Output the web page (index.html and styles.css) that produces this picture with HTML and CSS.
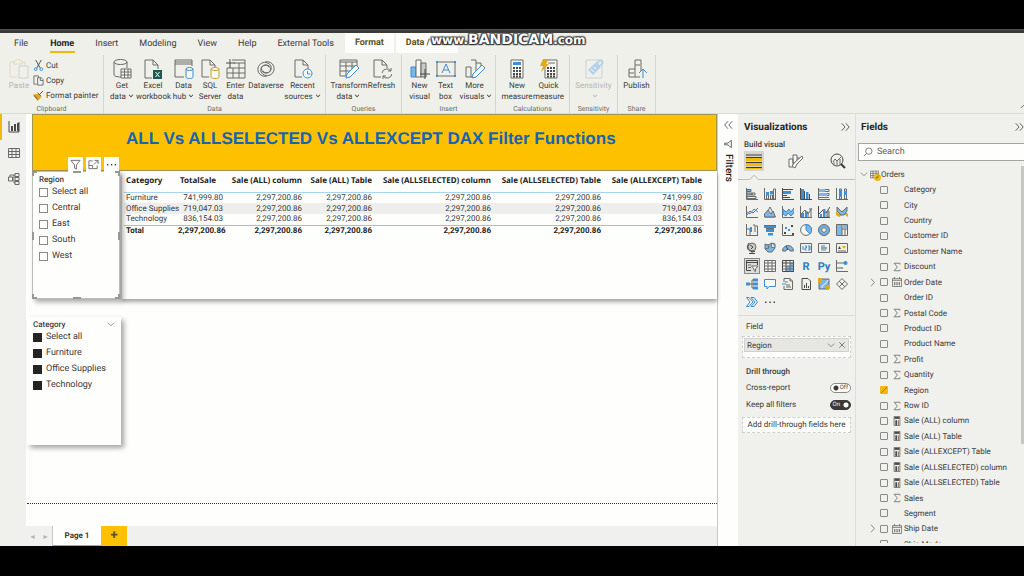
FILE: index.html
```
<!DOCTYPE html>
<html lang="en">
<head>
  <meta charset="UTF-8" />
  <meta name="viewport" content="width=device-width, initial-scale=1.0" />
  <title>ALL Vs ALLSELECTED Vs ALLEXCEPT</title>
  <link rel="stylesheet" href="styles.css">
</head>
<body>

  <!-- icon sprite -->
  <svg class="sprite" aria-hidden="true">
    <!-- ribbon, 20x20 -->
    <symbol id="i-paste" viewBox="0 0 20 20"><path class="tan" d="M8 18H1V3h4M13 3h3v3M5 5V2h2a2 2 0 0 1 4 0h2v3z"/><path class="pale" d="M10 7h9v12h-9z"/></symbol>
    <symbol id="i-cut" viewBox="0 0 12 12"><path class="ln2" d="M3 0l5 9M9 0L4 9"/><circle class="bl" cx="3" cy="10" r="1.5"/><circle class="bl" cx="9" cy="10" r="1.5"/></symbol>
    <symbol id="i-copy" viewBox="0 0 12 12"><path class="ln" d="M4 10H1V1h5v2M5 3h4l2 2v6H5zM8 3v3h3"/></symbol>
    <symbol id="i-brush" viewBox="0 0 12 12"><path class="gold" d="M0 5l6-1 3 4-4 4z"/><path class="ln2" d="M5 3l4 4M7 5l4-4M1 6l4 4"/></symbol>
    <symbol id="i-get" viewBox="0 0 20 20"><path class="ln" d="M9 18c-4 0-7-1-7-2V3M15 3v6"/><ellipse class="ln" cx="8.500" cy="3" rx="6.500" ry="2.500"/><path class="ln wf" d="M9 10h10v9H9zM9 13h10M9 16h10M12.500 10v9M16 10v9"/></symbol>
    <symbol id="i-excel" viewBox="0 0 20 20"><path class="ln" d="M9 19H2V1h8l5 5v4M10 1v5h5"/><path class="xl" d="M10 11h9v9h-9z"/><path class="wl" d="M12.500 13l4 5M16.500 13l-4 5"/></symbol>
    <symbol id="i-hub" viewBox="0 0 20 20"><path class="ln" d="M10 18H1V1h17v6M1 5h17M1 3h17"/><path class="bl wf" d="M12 10v8c0 2 7 2 7 0v-8"/><ellipse class="bl wf" cx="15.500" cy="10" rx="3.500" ry="1.500"/></symbol>
    <symbol id="i-sql" viewBox="0 0 20 20"><path class="ln" d="M9 18H2V1h8l5 5v2M10 1v5h5"/><path class="gd wf" d="M11 10v8c0 2 8 2 8 0v-8"/><ellipse class="gd wf" cx="15" cy="10" rx="4" ry="1.500"/></symbol>
    <symbol id="i-enter" viewBox="0 0 20 20"><path class="ln" d="M6 1h13v18H1V9M1 9h18M1 14h18M7 9v10M13 4v15M8 4h11"/><path class="ln2" d="M4 0v9M0 4h9"/></symbol>
    <symbol id="i-verse" viewBox="0 0 20 20"><path class="ln" d="M11 17a7 7 0 1 1 4-10c1 4-1 7-5 7a4 4 0 1 1 3-6M9 3a7 7 0 1 1-4 10c-1-4 1-7 5-7a4 4 0 1 1-3 6"/></symbol>
    <symbol id="i-recent" viewBox="0 0 20 20"><path class="ln" d="M9 18H2V1h8l5 5v4M10 1v5h5"/><circle class="bl wf" cx="14.500" cy="14.500" r="4.500"/><path class="bl" d="M14.500 12v3h3"/></symbol>
    <symbol id="i-transform" viewBox="0 0 20 20"><path class="ln" d="M8 17H1V1h17v7M1 3h17M1 7h17M1 12h11M7 3v14M13 3v8"/><path class="bl wf" d="M7 19l1-4L17 6l3 3-9 9z"/></symbol>
    <symbol id="i-refresh" viewBox="0 0 20 20"><path class="ln" d="M9 18H2V1h8l5 5v3M10 1v5h5"/><path class="ln" d="M10 14a5 5 0 0 1 9-2M19 9v3h-3M20 15a5 5 0 0 1-9 2M11 20v-3h3"/></symbol>
    <symbol id="i-visual" viewBox="0 0 20 20"><path class="bl bf" d="M1 8h5v10H1z"/><path class="ln wf" d="M6 1h5v17H6z"/><path class="ln gf" d="M11 4h5v14h-5z"/><path class="ln2" d="M15 10v10M10 15h10"/></symbol>
    <symbol id="i-text" viewBox="0 0 20 20"><path class="ln" d="M1 3h18v14H1z"/><path class="bl" d="M6 14l4-9 4 9M7.500 11h5"/><path class="bs" d="M0 2h2v2H0zM18 2h2v2h-2zM0 16h2v2H0zM18 16h2v2h-2z"/></symbol>
    <symbol id="i-more" viewBox="0 0 20 20"><path class="ln" d="M1 8h5v10H1zM6 1h5v17H6M11 4h5v4"/><path class="bl wf" d="M7 19l1-4L17 6l3 3-9 9z"/></symbol>
    <symbol id="i-calc" viewBox="0 0 20 20"><path class="ln wf" d="M4 1h12v18H4z"/><path class="bs" d="M6 3h8v3H6z"/><path class="dots" d="M6 9h8M6 12h8M6 15h8M6 17.500h8"/></symbol>
    <symbol id="i-quick" viewBox="0 0 20 20"><path class="ln wf" d="M6 1h12v18H6z"/><path class="ln" d="M9 4h7"/><path class="dots" d="M8 9h8M8 12h8M8 15h8M8 17.500h8"/><path class="gold" d="M4 0h6L7 5h3l-8 8 2-6H1z"/></symbol>
    <symbol id="i-sens" viewBox="0 0 20 20"><path class="pale" d="M2 1h16v18H2z"/><path class="paleb" d="M4 11l8-8 5 5-8 8z"/><path class="wl" d="M7 10l3 3M10 8l2 2"/><path class="pb" d="M13 5l2-3a2 2 0 0 1 3 3l-3 2"/></symbol>
    <symbol id="i-publish" viewBox="0 0 20 20"><path class="ln" d="M13 18H2v-8h6M8 18V6h5M8 6V1h6v11M2 14h5"/><path class="bl" d="M16 19v-9M12 14l4-4 4 4"/></symbol>

    <!-- side rail and page chrome, 12x12 -->
    <symbol id="i-report" viewBox="0 0 12 12"><path class="ln2" d="M1 0v11h10V1"/><path class="ds" d="M3 5h2v5H3zM6 3h2v7H6zM9 2h2v8H9z"/></symbol>
    <symbol id="i-grid" viewBox="0 0 12 12"><path class="ln" d="M.500 1.500h11v9H.500zM.500 4.500h11M.500 7.500h11M4 1.500v9M8 1.500v9"/></symbol>
    <symbol id="i-model" viewBox="0 0 12 12"><path class="ln" d="M.500 4h4v4h-4zM7 .500h4v3H7zM7 4.500h4v3H7zM7 8.500h4v3H7zM4.500 5H6V2h1M4.500 7H6v3h1M2 4V2h4"/></symbol>
    <symbol id="i-funnel" viewBox="0 0 12 12"><path class="ln" d="M1 1.500h10L7 6.500V11l-2-1V6.500z"/></symbol>
    <symbol id="i-focus" viewBox="0 0 12 12"><path class="ln" d="M5 2H1v8.500h9V7M1 7h4v3M7 1.500h4v4M11 1.500L6.500 6"/></symbol>
    <symbol id="i-dots" viewBox="0 0 12 12"><path class="ds" d="M1 5.500h1.500V7H1zM5.300 5.500h1.500V7H5.300zM9.500 5.500H11V7H9.500z"/></symbol>
    <symbol id="i-down" viewBox="0 0 12 12"><path class="ln" d="M1 4l5 4.500L11 4"/></symbol>
    <symbol id="i-right" viewBox="0 0 12 12"><path class="ln" d="M4 1l4.500 5L4 11"/></symbol>
    <symbol id="i-up" viewBox="0 0 12 12"><path class="ln2" d="M1 8l5-4.500L11 8"/></symbol>
    <symbol id="i-close" viewBox="0 0 12 12"><path class="ln2" d="M2 2l8 8M10 2l-8 8"/></symbol>
    <symbol id="i-dright" viewBox="0 0 12 12"><path class="ln2" d="M2 1.500L6 6l-4 4.500M7 1.500L11 6l-4 4.500"/></symbol>
    <symbol id="i-dleft" viewBox="0 0 12 12"><path class="ln2" d="M6 1.500L2 6l4 4.500M11 1.500L7 6l4 4.500"/></symbol>
    <symbol id="i-horn" viewBox="0 0 12 12"><path class="ln2" d="M10 1.500v9L6 7H2V5h4z"/></symbol>
    <symbol id="i-search" viewBox="0 0 12 12"><circle class="ln" cx="7" cy="5" r="3.800"/><path class="ln" d="M4.300 7.700L1 11"/></symbol>
    <symbol id="i-sigma" viewBox="0 0 12 12"><path class="ln" d="M9.500 3V1.500H2.500L6.500 6l-4 4.500h7V9"/></symbol>
    <symbol id="i-cal" viewBox="0 0 12 12"><path class="ln" d="M.500 2h11v9.500H.500zM.500 4h11M3 0v2M9 0v2M3 6v4M5 6v4M7 6v4M9 6v4"/></symbol>
    <symbol id="i-fcalc" viewBox="0 0 12 12"><path class="ln" d="M2.500 .500h7v11h-7z"/><path class="ds" d="M3 1h6v2.500H3z"/><path class="dots" d="M4 6h4M4 8h4M4 10h4"/></symbol>

    <!-- visual gallery, 12x12 -->
    <symbol id="v-hstack" viewBox="0 0 12 12"><path class="ln" d="M.500 0v11.500H12"/><path class="ln bf" d="M1 1.500h4v2H1zM1 5h5v2H1z"/><path class="ln" d="M6 5h3v2H6zM1 8.500h9v2H1z"/></symbol>
    <symbol id="v-vstack" viewBox="0 0 12 12"><path class="ln" d="M.500 0v11.500H12M2.500 7h2v4h-2zM6.500 7h2v4h-2zM9.500 1h2v10h-2z"/><path class="bs" d="M2 4h3v3H2zM6 3h3v3H6z"/></symbol>
    <symbol id="v-hbar" viewBox="0 0 12 12"><path class="ln2" d="M.500 0v11.500H12M1 1.500h10M1 7.500h4M1 9.500h7"/><path class="bs" d="M1 3h8v3H1z"/></symbol>
    <symbol id="v-vbar" viewBox="0 0 12 12"><path class="ln2" d="M.500 0v11.500H12M4.500 3v8M9.500 6v5"/><path class="bs" d="M1 1h3v10H1zM6 4h2.500v7H6z"/></symbol>
    <symbol id="v-hfull" viewBox="0 0 12 12"><path class="ln" d="M.500 0v11.500H12M1 1.500h10v2H1zM1 5.500h10v2H1zM1 9.500h10"/><path class="bf" d="M1 1h6v3H1zM1 5h8v3H1z"/></symbol>
    <symbol id="v-vfull" viewBox="0 0 12 12"><path class="ln" d="M.500 0v11.500H12M3.500 1h2v10h-2zM8.500 1h2v10h-2z"/><path class="bs" d="M3 2h3v7H3zM8 3h3v4H8z"/></symbol>
    <symbol id="v-line" viewBox="0 0 12 12"><path class="ln" d="M.500 0v11.500H12M1 9l3-4 3 2 5-5"/><path class="bl" d="M1 6l3 2 4-5 4 3"/></symbol>
    <symbol id="v-area" viewBox="0 0 12 12"><path class="ln" d="M1 11l5-10 5 10z"/><path class="ln bf" d="M.500 11V8L4 4l3 4 2-3 2.500 6z"/></symbol>
    <symbol id="v-sarea" viewBox="0 0 12 12"><path class="ln" d="M.500 0v11.500H12"/><path class="bl bf" d="M1 8V3l3 3 3-3 2 3 3-4v5l-3 3-3-3-2 3z"/></symbol>
    <symbol id="v-combo" viewBox="0 0 12 12"><path class="ln" d="M.500 0v11.500H12M6 6h2v5M9 3h2v8M1 8l4-4 3 4 4-6"/><path class="bs" d="M1 7h3v4H1zM5 5h2v6H5z"/></symbol>
    <symbol id="v-combo2" viewBox="0 0 12 12"><path class="ln2" d="M.500 0v11.500H12M1 8l4-4 3 3 4-6"/><path class="bs" d="M2 8h2v3H2zM5 3h2.500v8H5z"/><path class="ln gf" d="M9 5h2v6H9z"/></symbol>
    <symbol id="v-ribbon" viewBox="0 0 12 12"><path class="gold" d="M0 5l3 3 4-4 5 4v3L8 8l-5 3-3-2z"/><path class="ln bf" d="M1 1l5 5 5-5v4L8 9H5L1 5z"/></symbol>
    <symbol id="v-fall" viewBox="0 0 12 12"><path class="ln" d="M.500 0v11.500H12M1 5h3v6M7 1h2v7M9.500 2h2v9"/><path class="bs" d="M4 3h2v5H4z"/></symbol>
    <symbol id="v-funnel" viewBox="0 0 12 12"><path class="bs" d="M0 1h12v3H0zM2 5h8v3H2zM4 9h5v2.500H4z"/><path class="ln" d="M0 1.500h12M2 4.500h8"/></symbol>
    <symbol id="v-scatter" viewBox="0 0 12 12"><path class="ln" d="M.500 0v11.500H12"/><path class="ds" d="M9 1h2v2H9zM2 8h2v2H2zM10 9h2v2h-2z"/><path class="bs" d="M3 3h2v2H3zM6 5h2v2H6z"/></symbol>
    <symbol id="v-pie" viewBox="0 0 12 12"><circle class="ln wf" cx="6" cy="6" r="5.400"/><path class="bl bf" d="M6 .600v5.400l4 4A5.400 5.400 0 0 0 6 .600z"/></symbol>
    <symbol id="v-donut" viewBox="0 0 12 12"><circle class="thick" cx="6" cy="6" r="4"/><circle class="ln" cx="6" cy="6" r="5.500"/><circle class="ln" cx="6" cy="6" r="2.300"/></symbol>
    <symbol id="v-tree" viewBox="0 0 12 12"><path class="bf" d="M1 1h5v10H1zM7 1h4v3H7z"/><path class="ln" d="M.500 .500h11v11H.500zM6 .500v11M6 5h6M9 5v6.500"/></symbol>
    <symbol id="v-map" viewBox="0 0 12 12"><circle class="ln gf" cx="6" cy="5" r="4"/><path class="ln2" d="M3 1C0 4 1 9 6 9.500h3M6 9v2M3 11.500h6M4 3l3 2-2 2"/></symbol>
    <symbol id="v-fmap" viewBox="0 0 12 12"><path class="ln bf" d="M1 2l3 1 4-2 3 1v4L8 10H4L1 7zM4 3l1 3-4 1M8 1L7 5l4 1"/></symbol>
    <symbol id="v-gauge" viewBox="0 0 12 12"><path class="ln bf" d="M.500 9a5.500 5.500 0 0 1 11 0H8a2 2 0 0 0-4 0z"/><path class="ln2" d="M6 8L4 4"/></symbol>
    <symbol id="v-card" viewBox="0 0 12 12"><path class="ln" d="M.500 1.500h11v9H.500z"/><path class="bl" d="M3 4v4M5 4h1.500v2H5v2h1.500M8 4h2v2H8.500H10v2H8"/></symbol>
    <symbol id="v-mcard" viewBox="0 0 12 12"><path class="ln" d="M.500 1.500h11v9H.500z"/><path class="bl" d="M3 4h4M3 8h5"/><path class="ln2" d="M3 6h6"/></symbol>
    <symbol id="v-kpi" viewBox="0 0 12 12"><path class="ln" d="M.500 1.500h11v9H.500zM2 9h8"/><path class="ds" d="M2 7l1.500-3L5 7z"/><path class="gold" d="M6 4h4L8 7z"/></symbol>
    <symbol id="v-slicer" viewBox="0 0 12 12"><path class="ln2" d="M5 10.500H.500v-10h11V5M.500 2.500h11"/><path class="ln" d="M2 5h3M2 7.500h3"/><path class="ln wf" d="M5.500 6h6.500l-2.500 3v2.500l-1.500-1V9z"/></symbol>
    <symbol id="v-table" viewBox="0 0 12 12"><path class="ln wf" d="M.500 .500h11v11H.500zM.500 3h11M.500 6h11M.500 9h11M4 .500v11M8 .500v11"/></symbol>
    <symbol id="v-matrix" viewBox="0 0 12 12"><path class="bf" d="M4 6h8v6H4zM8 3h4v3H8z"/><path class="ln2" d="M.500 .500h11v11H.500zM.500 3h11M4 .500v11"/><path class="ln" d="M.500 6h11M.500 9h11M8 .500v11"/></symbol>
    <symbol id="v-infl" viewBox="0 0 12 12"><path class="ln" d="M.500 0v11.500H12M1 3h7M1 8h4"/><circle class="bs" cx="9.500" cy="3" r="2"/><circle class="bs" cx="6" cy="8" r="1"/></symbol>
    <symbol id="v-decomp" viewBox="0 0 12 12"><path class="ln" d="M3 6h3M6 2v8M6 2h2M6 10h2M6 6h2"/><path class="bs" d="M0 4.500h4v3H0zM7 .500h5v3H7zM7 4.500h5v3H7zM7 8.500h5v3H7z"/></symbol>
    <symbol id="v-qa" viewBox="0 0 12 12"><path class="bl wf" d="M.500 1.500h11v7H5L3 11V8.500H.500z"/></symbol>
    <symbol id="v-narr" viewBox="0 0 12 12"><path class="ln" d="M2 4V.500h6L10.500 3v8.500H2V8M8 .500V3h2.500M4 7h4M4 9h5"/><path class="bl" d="M0 6h4M3 4h3"/></symbol>
    <symbol id="v-page" viewBox="0 0 12 12"><path class="ln2" d="M2 .500h6L10.500 3v8.500H2z"/><path class="ds" d="M4 7h1v3H4zM6 5h1v5H6zM8 8h1v2H8z"/></symbol>
    <symbol id="v-arc" viewBox="0 0 12 12"><path class="ln bf" d="M1 1h10v10H1z"/><path class="wl" d="M4 10c0-4 4-3 6-8"/><path class="gold" d="M0 0h4v4l-2 2-2-2zM8 7h3v4H8z"/></symbol>
    <symbol id="v-app" viewBox="0 0 12 12"><path class="ln" d="M6 .500L11.500 6 6 11.500.500 6zM3.200 3.200l5.600 5.600M8.800 3.200L3.200 8.800"/></symbol>
    <symbol id="v-auto" viewBox="0 0 12 12"><path class="bl" d="M.500 1.500H3L7 6l-4 4.500H.500L4 6zM5 1.500h3L11.500 6 8 10.500H5L9 6z"/></symbol>
    <symbol id="i-format" viewBox="0 0 16 16"><path class="ln wf" d="M1 6h4v8H1zM5 2h4v8H5zM9 5h3v3"/><path class="ln wf" d="M15 5l-6 6-2 4-3-2 3-4 7-6z"/></symbol>
    <symbol id="i-analytics" viewBox="0 0 16 16"><circle class="ln2" cx="7" cy="7" r="6"/><path class="ln" d="M3 9l2-3 2 2 4-4M4 12V9M7 12V8M10 12V6"/><path class="ln3" d="M11 11l4 4"/></symbol>
  </svg>

  <div class="title-strip"></div>

  <nav class="tabs">
    <button class="tab">File</button>
    <button class="tab active">Home</button>
    <button class="tab">Insert</button>
    <button class="tab">Modeling</button>
    <button class="tab">View</button>
    <button class="tab">Help</button>
    <button class="tab">External Tools</button>
    <button class="tab context">Format</button>
    <button class="tab context">Data / Drill</button>
    <div class="watermark"><small>www.</small>BANDICAM<small>.com</small></div>
  </nav>

  <header class="ribbon">
    <section class="group clipboard">
      <div class="tools">
        <button class="tool off"><svg><use href="#i-paste"/></svg>Paste</button>
        <div class="small-tools">
          <button><svg><use href="#i-cut"/></svg>Cut</button>
          <button><svg><use href="#i-copy"/></svg>Copy</button>
          <button><svg><use href="#i-brush"/></svg>Format painter</button>
        </div>
      </div>
      <h2>Clipboard</h2>
    </section>
    <section class="group data">
      <div class="tools">
        <button class="tool"><svg><use href="#i-get"/></svg>Get<br>data<i class="caret"></i></button>
        <button class="tool"><svg><use href="#i-excel"/></svg>Excel<br>workbook</button>
        <button class="tool"><svg><use href="#i-hub"/></svg>Data<br>hub<i class="caret"></i></button>
        <button class="tool"><svg><use href="#i-sql"/></svg>SQL<br>Server</button>
        <button class="tool"><svg><use href="#i-enter"/></svg>Enter<br>data</button>
        <button class="tool"><svg><use href="#i-verse"/></svg>Dataverse</button>
        <button class="tool"><svg><use href="#i-recent"/></svg>Recent<br>sources<i class="caret"></i></button>
      </div>
      <h2>Data</h2>
    </section>
    <section class="group queries">
      <div class="tools">
        <button class="tool"><svg><use href="#i-transform"/></svg>Transform<br>data<i class="caret"></i></button>
        <button class="tool"><svg><use href="#i-refresh"/></svg>Refresh</button>
      </div>
      <h2>Queries</h2>
    </section>
    <section class="group insert">
      <div class="tools">
        <button class="tool"><svg><use href="#i-visual"/></svg>New<br>visual</button>
        <button class="tool"><svg><use href="#i-text"/></svg>Text<br>box</button>
        <button class="tool"><svg><use href="#i-more"/></svg>More<br>visuals<i class="caret"></i></button>
      </div>
      <h2>Insert</h2>
    </section>
    <section class="group calculations">
      <div class="tools">
        <button class="tool"><svg><use href="#i-calc"/></svg>New<br>measure</button>
        <button class="tool"><svg><use href="#i-quick"/></svg>Quick<br>measure</button>
      </div>
      <h2>Calculations</h2>
    </section>
    <section class="group sensitivity">
      <div class="tools">
        <button class="tool off"><svg><use href="#i-sens"/></svg>Sensitivity<br><i class="caret"></i></button>
      </div>
      <h2>Sensitivity</h2>
    </section>
    <section class="group share">
      <div class="tools">
        <button class="tool"><svg><use href="#i-publish"/></svg>Publish</button>
      </div>
      <h2>Share</h2>
    </section>
    <button class="collapse" aria-label="Collapse ribbon"><svg><use href="#i-up"/></svg></button>
  </header>

  <main class="workspace">
    <nav class="rail">
      <button class="active" aria-label="Report"><svg><use href="#i-report"/></svg></button>
      <button aria-label="Data"><svg><use href="#i-grid"/></svg></button>
      <button aria-label="Model"><svg><use href="#i-model"/></svg></button>
    </nav>

    <div class="center">
      <div class="canvas">
        <h1 class="banner">ALL Vs ALLSELECTED Vs ALLEXCEPT DAX Filter Functions</h1>
        <div class="visuals">
          <section class="slicer selected">
            <div class="visual-header">
              <button aria-label="Filters"><svg><use href="#i-funnel"/></svg></button>
              <button aria-label="Focus mode"><svg><use href="#i-focus"/></svg></button>
              <button aria-label="More options"><svg><use href="#i-dots"/></svg></button>
            </div>
            <i class="grip tl"></i><i class="grip tm"></i><i class="grip tr"></i>
            <i class="grip ml"></i><i class="grip mr"></i>
            <i class="grip bl-c"></i><i class="grip bm"></i><i class="grip br"></i>
            <h3>Region</h3>
            <label><input type="checkbox">Select all</label>
            <label><input type="checkbox">Central</label>
            <label><input type="checkbox">East</label>
            <label><input type="checkbox">South</label>
            <label><input type="checkbox">West</label>
          </section>

          <section class="table-card">
            <table>
              <colgroup><col class="c1"><col class="c2"><col class="c3"><col class="c4"><col class="c5"><col class="c6"><col class="c7"></colgroup>
              <thead>
                <tr><th>Category</th><th>TotalSale</th><th>Sale (ALL) column</th><th>Sale (ALL) Table</th><th>Sale (ALLSELECTED) column</th><th>Sale (ALLSELECTED) Table</th><th>Sale (ALLEXCEPT) Table</th></tr>
              </thead>
              <tbody>
                <tr><td>Furniture</td><td>741,999.80</td><td>2,297,200.86</td><td>2,297,200.86</td><td>2,297,200.86</td><td>2,297,200.86</td><td>741,999.80</td></tr>
                <tr><td>Office Supplies</td><td>719,047.03</td><td>2,297,200.86</td><td>2,297,200.86</td><td>2,297,200.86</td><td>2,297,200.86</td><td>719,047.03</td></tr>
                <tr><td>Technology</td><td>836,154.03</td><td>2,297,200.86</td><td>2,297,200.86</td><td>2,297,200.86</td><td>2,297,200.86</td><td>836,154.03</td></tr>
              </tbody>
              <tfoot>
                <tr><td>Total</td><td>2,297,200.86</td><td>2,297,200.86</td><td>2,297,200.86</td><td>2,297,200.86</td><td>2,297,200.86</td><td>2,297,200.86</td></tr>
              </tfoot>
            </table>
          </section>
        </div>

        <section class="slicer category">
          <h3>Category <svg><use href="#i-down"/></svg></h3>
          <label><input type="checkbox" checked>Select all</label>
          <label><input type="checkbox" checked>Furniture</label>
          <label><input type="checkbox" checked>Office Supplies</label>
          <label><input type="checkbox" checked>Technology</label>
        </section>
        <div class="page-end"></div>
      </div>

      <footer class="pages">
        <button class="arrow" aria-label="Previous page">◂</button>
        <button class="arrow" aria-label="Next page">▸</button>
        <button class="page">Page 1</button>
        <button class="add" aria-label="New page">+</button>
      </footer>
    </div>

    <aside class="filters">
      <svg><use href="#i-dleft"/></svg>
      <svg><use href="#i-horn"/></svg>
      <span>Filters</span>
    </aside>

    <aside class="viz">
      <h2>Visualizations <svg><use href="#i-dright"/></svg></h2>
      <h3>Build visual</h3>
      <div class="viz-tabs">
        <button class="build active" aria-label="Build"><i></i></button>
        <button aria-label="Format"><svg><use href="#i-format"/></svg></button>
        <button aria-label="Analytics"><svg><use href="#i-analytics"/></svg></button>
      </div>
      <div class="gallery">
        <button><svg><use href="#v-hstack"/></svg></button>
        <button><svg><use href="#v-vstack"/></svg></button>
        <button><svg><use href="#v-hbar"/></svg></button>
        <button><svg><use href="#v-vbar"/></svg></button>
        <button><svg><use href="#v-hfull"/></svg></button>
        <button><svg><use href="#v-vfull"/></svg></button>
        <button><svg><use href="#v-line"/></svg></button>
        <button><svg><use href="#v-area"/></svg></button>
        <button><svg><use href="#v-sarea"/></svg></button>
        <button><svg><use href="#v-combo"/></svg></button>
        <button><svg><use href="#v-combo2"/></svg></button>
        <button><svg><use href="#v-ribbon"/></svg></button>
        <button><svg><use href="#v-fall"/></svg></button>
        <button><svg><use href="#v-funnel"/></svg></button>
        <button><svg><use href="#v-scatter"/></svg></button>
        <button><svg><use href="#v-pie"/></svg></button>
        <button><svg><use href="#v-donut"/></svg></button>
        <button><svg><use href="#v-tree"/></svg></button>
        <button><svg><use href="#v-map"/></svg></button>
        <button><svg><use href="#v-fmap"/></svg></button>
        <button><svg><use href="#v-gauge"/></svg></button>
        <button><svg><use href="#v-card"/></svg></button>
        <button><svg><use href="#v-mcard"/></svg></button>
        <button><svg><use href="#v-kpi"/></svg></button>
        <button class="active"><svg><use href="#v-slicer"/></svg></button>
        <button><svg><use href="#v-table"/></svg></button>
        <button><svg><use href="#v-matrix"/></svg></button>
        <button>R</button>
        <button>Py</button>
        <button><svg><use href="#v-infl"/></svg></button>
        <button><svg><use href="#v-decomp"/></svg></button>
        <button><svg><use href="#v-qa"/></svg></button>
        <button><svg><use href="#v-narr"/></svg></button>
        <button><svg><use href="#v-page"/></svg></button>
        <button><svg><use href="#v-arc"/></svg></button>
        <button><svg><use href="#v-app"/></svg></button>
        <button><svg><use href="#v-auto"/></svg></button>
        <button><svg><use href="#i-dots"/></svg></button>
      </div>
      <div class="wells">
        <h4>Field</h4>
        <div class="well">
          <div class="chip"><span>Region</span><svg><use href="#i-down"/></svg><svg><use href="#i-close"/></svg></div>
        </div>
        <h4 class="drill">Drill through</h4>
        <label class="switch"><span>Cross-report</span><input type="checkbox"><b>Off</b></label>
        <label class="switch"><span>Keep all filters</span><input type="checkbox" checked><b>On</b></label>
        <div class="well drop">Add drill-through fields here</div>
      </div>
    </aside>

    <aside class="fields">
      <h2>Fields <svg><use href="#i-dright"/></svg></h2>
      <div class="search"><svg><use href="#i-search"/></svg><input type="text" placeholder="Search" aria-label="Search"></div>
      <div class="entity"><svg><use href="#i-down"/></svg><span class="table-icon"><svg><use href="#i-grid"/></svg><i>✓</i></span>Orders</div>
      <div class="list">
        <ul>
          <li><label><input type="checkbox"><span></span>Category</label></li>
          <li><label><input type="checkbox"><span></span>City</label></li>
          <li><label><input type="checkbox"><span></span>Country</label></li>
          <li><label><input type="checkbox"><span></span>Customer ID</label></li>
          <li><label><input type="checkbox"><span></span>Customer Name</label></li>
          <li><label><input type="checkbox"><span><svg><use href="#i-sigma"/></svg></span>Discount</label></li>
          <li class="expand"><svg><use href="#i-right"/></svg><label><input type="checkbox"><span><svg><use href="#i-cal"/></svg></span>Order Date</label></li>
          <li><label><input type="checkbox"><span></span>Order ID</label></li>
          <li><label><input type="checkbox"><span><svg><use href="#i-sigma"/></svg></span>Postal Code</label></li>
          <li><label><input type="checkbox"><span></span>Product ID</label></li>
          <li><label><input type="checkbox"><span></span>Product Name</label></li>
          <li><label><input type="checkbox"><span><svg><use href="#i-sigma"/></svg></span>Profit</label></li>
          <li><label><input type="checkbox"><span><svg><use href="#i-sigma"/></svg></span>Quantity</label></li>
          <li><label><input type="checkbox" checked><span></span>Region</label></li>
          <li><label><input type="checkbox"><span><svg><use href="#i-sigma"/></svg></span>Row ID</label></li>
          <li><label><input type="checkbox"><span><svg><use href="#i-fcalc"/></svg></span>Sale (ALL) column</label></li>
          <li><label><input type="checkbox"><span><svg><use href="#i-fcalc"/></svg></span>Sale (ALL) Table</label></li>
          <li><label><input type="checkbox"><span><svg><use href="#i-fcalc"/></svg></span>Sale (ALLEXCEPT) Table</label></li>
          <li><label><input type="checkbox"><span><svg><use href="#i-fcalc"/></svg></span>Sale (ALLSELECTED) column</label></li>
          <li><label><input type="checkbox"><span><svg><use href="#i-fcalc"/></svg></span>Sale (ALLSELECTED) Table</label></li>
          <li><label><input type="checkbox"><span><svg><use href="#i-sigma"/></svg></span>Sales</label></li>
          <li><label><input type="checkbox"><span></span>Segment</label></li>
          <li class="expand"><svg><use href="#i-right"/></svg><label><input type="checkbox"><span><svg><use href="#i-cal"/></svg></span>Ship Date</label></li>
          <li><label><input type="checkbox"><span></span>Ship Mode</label></li>
        </ul>
      </div>
      <div class="scrollbar"></div>
    </aside>
  </main>

</body>
</html>
```
FILE: styles.css
```
* {
  box-sizing: border-box;
}

body {
  margin: 0;
  height: 100vh;
  padding: 29px 0 30px;
  display: flex;
  flex-direction: column;
  background: #000;
  color: #3b3a39;
  font-family: Roboto, "Open Sans", sans-serif;
  font-size: 8px;
  text-rendering: geometricPrecision;
  overflow: hidden;
}

button, input {
  font: inherit;
  color: inherit;
  text-rendering: inherit;
}

button {
  border: 0;
  padding: 0;
  background: none;
}

h1, h2, h3, h4, ul {
  margin: 0;
  padding: 0;
  font-size: inherit;
  font-weight: normal;
}

svg {
  display: block;
  flex: none;
  width: 12px;
  height: 12px;
}

.sprite {
  position: absolute;
  width: 0;
  height: 0;
}

/* icon strokes and fills */
.ln, .ln2, .ln3, .bl, .gd, .tan, .pale, .pb, .wl, .thick, .dots { fill: none; }
.ln { stroke: #6b6a68; }
.ln2 { stroke: #4a4947; }
.ln3 { stroke: #3b3a39; stroke-width: 2; }
.bl { stroke: #3f8bd0; }
.gd { stroke: #c9a02c; }
.tan { stroke: #e3d8bd; }
.pale { stroke: #cfcfcd; }
.paleb { fill: #b5d2ec; }
.pb { stroke: #b5d2ec; stroke-width: 2; }
.wl { stroke: #fff; }
.thick { stroke: #6fb2ea; stroke-width: 3; }
.dots { stroke: #4a4947; stroke-width: 2; stroke-dasharray: 2 1; }
.wf { fill: #f8f8f5; }
.gf { fill: #c8c8c6; }
.bf { fill: #79b8ec; }
.bs { fill: #3f8fd6; }
.ds { fill: #4a4947; }
.xl { fill: #1d5b52; }
.gold { fill: #e0a91c; }

.title-strip {
  height: 4px;
  background: #3b3a36;
  border-top: 1px solid #55544f;
}

/* ribbon tabs */
.tabs {
  position: relative;
  display: flex;
  height: 22px;
  padding-left: 4px;
  background: #f0f0eb;
  font-size: 9px;
}

.tab {
  margin-right: 1px;
  padding: 0 10px 1px;
  white-space: nowrap;
}

.tab.active {
  margin-left: 1px;
  font-weight: 700;
  color: #252423;
  background: linear-gradient(#f2b90c, #f2b90c) center 18px / 25px 2px no-repeat;
}

.tab.context {
  height: 20px;
  margin-right: 2px;
  background: #fdfdfb;
  color: #5d5326;
  font-weight: 700;
}

.watermark {
  position: absolute;
  left: 431px;
  top: -1px;
  color: #fff;
  font: bold 14px/16px "DejaVu Sans", sans-serif;
  text-shadow: 0 0 2px #222, 1px 1px 1px #333, -1px -1px 1px #555, 1px -1px 1px #555, -1px 1px 1px #444;
}

.watermark small {
  font-size: 12px;
}

/* ribbon */
.ribbon {
  display: flex;
  height: 59px;
  background: #f0f0eb;
  border-bottom: 1px solid #dcdcd6;
  overflow: hidden;
}

.group {
  display: flex;
  flex-direction: column;
  justify-content: space-between;
  border-right: 1px solid #d6d6d1;
  padding-top: 4px;
}

.group h2 {
  font-size: 7px;
  line-height: 8px;
  text-align: center;
  color: #6b6a68;
}

.tools {
  display: grid;
  justify-content: center;
}

.clipboard { width: 104px; }
.clipboard .tools { grid-template-columns: 28px 70px; justify-content: end; }
.data { width: 222px; }
.data .tools { grid-template-columns: 28px 34px 27px 26px 25px 36px 37px; }
.queries { width: 76px; }
.queries .tools { grid-template-columns: 36px 30px; }
.insert { width: 94px; }
.insert .tools { grid-template-columns: 24px 28px 30px; }
.calculations { width: 74px; }
.calculations .tools { grid-template-columns: 32px 31px; }
.sensitivity { width: 48px; }
.share { width: 38px; }

.tool {
  display: block;
  line-height: 11px;
  white-space: nowrap;
  text-align: center;
  align-self: start;
}

.tool svg {
  width: 20px;
  height: 20px;
  margin: 0 auto 1px;
}

.tool.off {
  color: #b5b4b1;
}

.caret {
  display: inline-block;
  width: 4px;
  height: 4px;
  margin: 0 1px 2px 3px;
  border: solid currentColor;
  border-width: 0 1px 1px 0;
  transform: rotate(45deg) scale(.8);
}

.collapse {
  align-self: flex-end;
  margin: 0 -5px 2px auto;
}

.collapse svg {
  width: 9px;
  height: 9px;
}

.small-tools button {
  display: flex;
  align-items: center;
  gap: 2px;
  height: 15px;
  margin-top: -1px;
  margin-bottom: 1px;
  white-space: nowrap;
}

.small-tools svg {
  width: 11px;
  height: 11px;
}

/* workspace */
.workspace {
  flex: 1;
  display: flex;
  min-height: 0;
  background: #fefefc;
}

.rail {
  width: 26px;
  background: #f0f0ed;
}

.rail button {
  display: flex;
  align-items: center;
  justify-content: center;
  width: 26px;
  height: 26px;
  border-left: 2px solid transparent;
}

.rail .active {
  border-left-color: #f2b90c;
}

.center {
  flex: 1;
  min-width: 0;
  display: flex;
  flex-direction: column;
  border-right: 1px solid #c8c8c4;
}

.canvas {
  flex: 1;
  display: flex;
  flex-direction: column;
  align-items: stretch;
  padding-left: 1px;
}

.banner {
  height: 57px;
  margin-left: 5px;
  padding: 12px 0 0 93px;
  background: #fdc100;
  border: 1px solid #a3974e;
  color: #1664b4;
  font: bold 17px/24px "Liberation Sans", Arial, sans-serif;
  white-space: nowrap;
}

.visuals {
  display: flex;
  gap: 2px;
  margin-left: 5px;
}

.slicer {
  position: relative;
  width: 88px;
  height: 128px;
  padding: 2px 6px;
  background: #fefefc;
  box-shadow: 3px 3px 5px rgba(0, 0, 0, 0.35);
  font-size: 9px;
}

.slicer h3 {
  display: flex;
  justify-content: space-between;
  align-items: center;
  height: 10px;
  font-size: 8px;
  font-weight: 500;
}

.slicer h3 svg {
  width: 8px;
  height: 8px;
}

.slicer label {
  display: flex;
  align-items: center;
  gap: 4px;
  height: 16px;
  white-space: nowrap;
}

input[type="checkbox"] {
  appearance: none;
  flex: none;
  margin: 0;
  width: 9px;
  height: 9px;
  border: 1px solid #8a8988;
  background: transparent;
}

.slicer input:checked {
  background: #252423;
  border-color: #252423;
}

.slicer.selected {
  border: 1px solid #bdbdb9;
}

.slicer.category {
  width: 94px;
  margin-top: 18px;
}

.visual-header {
  position: absolute;
  right: 0;
  bottom: 100%;
  display: flex;
  gap: 3px;
}

.visual-header button {
  display: flex;
  align-items: center;
  justify-content: center;
  width: 15px;
  height: 15px;
  background: #fefefc;
}

.visual-header svg {
  width: 11px;
  height: 11px;
}

.grip {
  position: absolute;
  width: 5px;
  height: 5px;
  border: 0 solid #979795;
}

.tl { left: -1px; top: -1px; border-width: 2px 0 0 2px; }
.tr { right: -1px; top: -1px; border-width: 2px 2px 0 0; }
.bl-c { left: -1px; bottom: -1px; border-width: 0 0 2px 2px; }
.br { right: -1px; bottom: -1px; border-width: 0 2px 2px 0; }
.tm, .bm { left: 40px; width: 8px; border-top-width: 2px; height: 2px; }
.tm { top: -1px; }
.bm { bottom: -1px; }
.ml, .mr { top: 60px; width: 2px; height: 8px; border-left-width: 2px; }
.ml { left: -1px; }
.mr { right: -1px; }

.table-card {
  flex: 1;
  padding-left: 2px;
  background: #fefefc;
  box-shadow: 0 3px 4px rgba(0, 0, 0, 0.35);
}

table {
  table-layout: fixed;
  border-collapse: collapse;
  width: 580px;
}

.c1 { width: 52px; }
.c2 { width: 49px; }
.c3 { width: 79px; }
.c4 { width: 70px; }
.c5 { width: 119px; }
.c6 { width: 110px; }
.c7 { width: 101px; }

th, td {
  height: 11px;
  padding: 0 2px;
  text-align: right;
  line-height: 10px;
  font-size: 8px;
  white-space: nowrap;
}

th {
  height: 21px;
  font-family: "Noto Sans", "Open Sans", sans-serif;
  font-weight: 700;
  color: #252423;
  border-bottom: 1px solid #a9d3ee;
}

th:first-child, td:first-child {
  text-align: left;
}

th:nth-child(2) {
  text-align: left;
  padding-left: 4px;
}

tbody tr:nth-child(2) {
  background: #eeeeec;
}

tfoot td {
  border-top: 1px solid #8fc7ea;
  font-weight: 700;
  color: #252423;
}

.page-end {
  margin-top: auto;
  margin-bottom: 22px;
  border-top: 1px dotted #333;
}

.pages {
  display: flex;
  height: 20px;
  background: #f0f0ee;
}

.arrow {
  width: 13px;
  color: #b5b4b1;
}

.page {
  width: 49px;
  background: #fefefc;
  border-bottom: 1px solid #d3aa1c;
  border-left: 1px solid #c8c8c4;
  font-weight: 700;
}

.add {
  width: 26px;
  background: #fdc100;
  color: #5d5326;
  font-size: 13px;
  font-weight: 700;
  line-height: 18px;
}

/* filters pane */
.filters {
  width: 20px;
  display: flex;
  flex-direction: column;
  align-items: center;
  gap: 9px;
  padding-top: 6px;
}

.filters svg {
  width: 10px;
  height: 10px;
}

.filters span {
  margin-top: -4px;
  writing-mode: vertical-rl;
  font-size: 10px;
  font-weight: 500;
  color: #252423;
}

/* visualizations pane */
.viz, .fields {
  background: #f0f0ec;
}

.viz {
  width: 118px;
  border-right: 1px solid #dededa;
}

.viz h2, .fields h2 {
  display: flex;
  align-items: center;
  justify-content: space-between;
  height: 26px;
  padding: 0 5px 0 6px;
  font-size: 10px;
  font-weight: 700;
  color: #252423;
}

.viz h2 svg, .fields h2 svg {
  width: 10px;
  height: 10px;
}

.viz h3 {
  padding-left: 6px;
  line-height: 10px;
  font-weight: 500;
}

.viz-tabs {
  display: flex;
  justify-content: space-between;
  height: 30px;
  padding: 1px 7px 0 6px;
  border-bottom: 1px solid #bdbdb9;
}

.viz-tabs button {
  position: relative;
  display: flex;
  align-items: center;
  justify-content: center;
  width: 20px;
  height: 20px;
}

.viz-tabs svg {
  width: 16px;
  height: 16px;
}

.viz-tabs .active {
  background: #d4d4d1;
}

.build i {
  width: 16px;
  height: 15px;
  border-top: 2px solid #8a8988;
  background: repeating-linear-gradient(#d4d4d1 0 1px, #3b3a39 1px 2px, #f2b90c 2px 5px);
}

/* notch under the open tab */
.build::after {
  content: "";
  position: absolute;
  left: 6px;
  bottom: -13px;
  width: 7px;
  height: 7px;
  background: #f0f0ec;
  border: solid #bdbdb9;
  border-width: 1px 0 0 1px;
  transform: rotate(45deg);
  clip-path: polygon(0 0, 100% 0, 0 100%);
}

.gallery {
  display: grid;
  grid-template-columns: repeat(6, 18px);
  grid-auto-rows: 18px;
  padding: 5px 0 4px 5px;
  border-bottom: 1px solid #dcdcd8;
}

.gallery button {
  display: flex;
  align-items: center;
  justify-content: center;
  color: #2f7cc0;
  font-size: 11px;
  font-weight: 700;
}

.gallery .active {
  margin: 1px;
  background: #dcdcd8;
  border: 1px solid #8a8988;
}

.wells {
  padding: 4px 4px 0;
}

.wells h4 {
  padding-left: 4px;
  line-height: 14px;
}

.well {
  height: 22px;
  margin-top: 2px;
  padding: 1px;
  background: #fefefc;
  border: 1px dashed #cfcfcb;
}

.chip {
  display: flex;
  align-items: center;
  gap: 3px;
  height: 14px;
  padding: 0 2px;
  background: #e6e6e2;
  border: 1px solid #d0d0cc;
}

.chip span {
  flex: 1;
}

.chip svg {
  width: 8px;
  height: 8px;
}

.wells .drill {
  margin-top: 7px;
  font-weight: 500;
}

.switch {
  position: relative;
  display: flex;
  align-items: center;
  height: 17px;
  padding-left: 4px;
}

.switch span {
  flex: 1;
}

.switch input {
  width: 21px;
  height: 10px;
  border-radius: 5px;
  background: radial-gradient(circle at 5px 4px, #3b3a39 2px, transparent 3px) #fefefc;
}

.switch input:checked {
  border-color: #3b3a39;
  background: radial-gradient(circle at 15px 4px, #fff 2px, transparent 3px) #3b3a39;
}

/* state caption lies over the switch */
.switch b {
  position: absolute;
  right: 3px;
  font-size: 6px;
  font-weight: normal;
}

.switch input:checked + b {
  right: 11px;
  color: #fff;
}

.well.drop {
  height: 16px;
  margin-top: 4px;
  padding: 0;
  line-height: 14px;
  text-align: center;
  white-space: nowrap;
}

/* fields pane */
.fields {
  position: relative;
  width: 168px;
  display: flex;
  flex-direction: column;
}

.fields h2 {
  height: 26px;
  padding: 0 0 0 5px;
}

.search {
  display: flex;
  align-items: center;
  gap: 4px;
  height: 18px;
  margin: 3px 0 0 2px;
  padding-left: 4px;
  background: #fefefc;
  border: 1px solid #a5a5a2;
  border-right: 0;
}

.search svg {
  width: 10px;
  height: 10px;
}

.search input {
  flex: 1;
  min-width: 0;
  padding: 0;
  border: 0;
  background: none;
  font-size: 9px;
}

.search input::placeholder {
  color: #605e5c;
}

.entity {
  display: flex;
  align-items: center;
  gap: 2px;
  height: 21px;
  padding: 5px 0 0 4px;
}

.entity > svg {
  width: 8px;
  height: 8px;
}

.table-icon {
  position: relative;
}

.table-icon svg {
  width: 9px;
  height: 9px;
}

.table-icon i {
  position: absolute;
  left: 4px;
  top: 4px;
  width: 7px;
  height: 7px;
  border-radius: 50%;
  background: #f2b90c;
  font: 6px/7px "DejaVu Sans", sans-serif;
  text-align: center;
}

.list {
  flex: 1;
  min-height: 0;
  margin-bottom: 3px;
  overflow: hidden;
}

.list ul {
  display: grid;
  grid-auto-rows: 1fr;
  height: calc(100% + 9px);
  list-style: none;
}

.list li {
  display: flex;
  align-items: center;
  padding-left: 24px;
}

.list .expand {
  padding-left: 12px;
}

.expand > svg {
  width: 9px;
  height: 9px;
  margin-right: 3px;
}

.list label {
  display: flex;
  align-items: center;
  white-space: nowrap;
}

.list input {
  width: 8px;
  height: 8px;
  border-radius: 1px;
}

.list input:checked {
  border-color: #f2b90c;
  background: linear-gradient(135deg, transparent 45%, #a07a10 45% 55%, transparent 55%) #f2b90c;
}

.list label span {
  width: 16px;
  padding-left: 4px;
}

.list label svg {
  width: 10px;
  height: 10px;
}

.scrollbar {
  position: absolute;
  right: 0;
  top: 52px;
  width: 3px;
  height: 278px;
  background: #c6c6c3;
}
```
